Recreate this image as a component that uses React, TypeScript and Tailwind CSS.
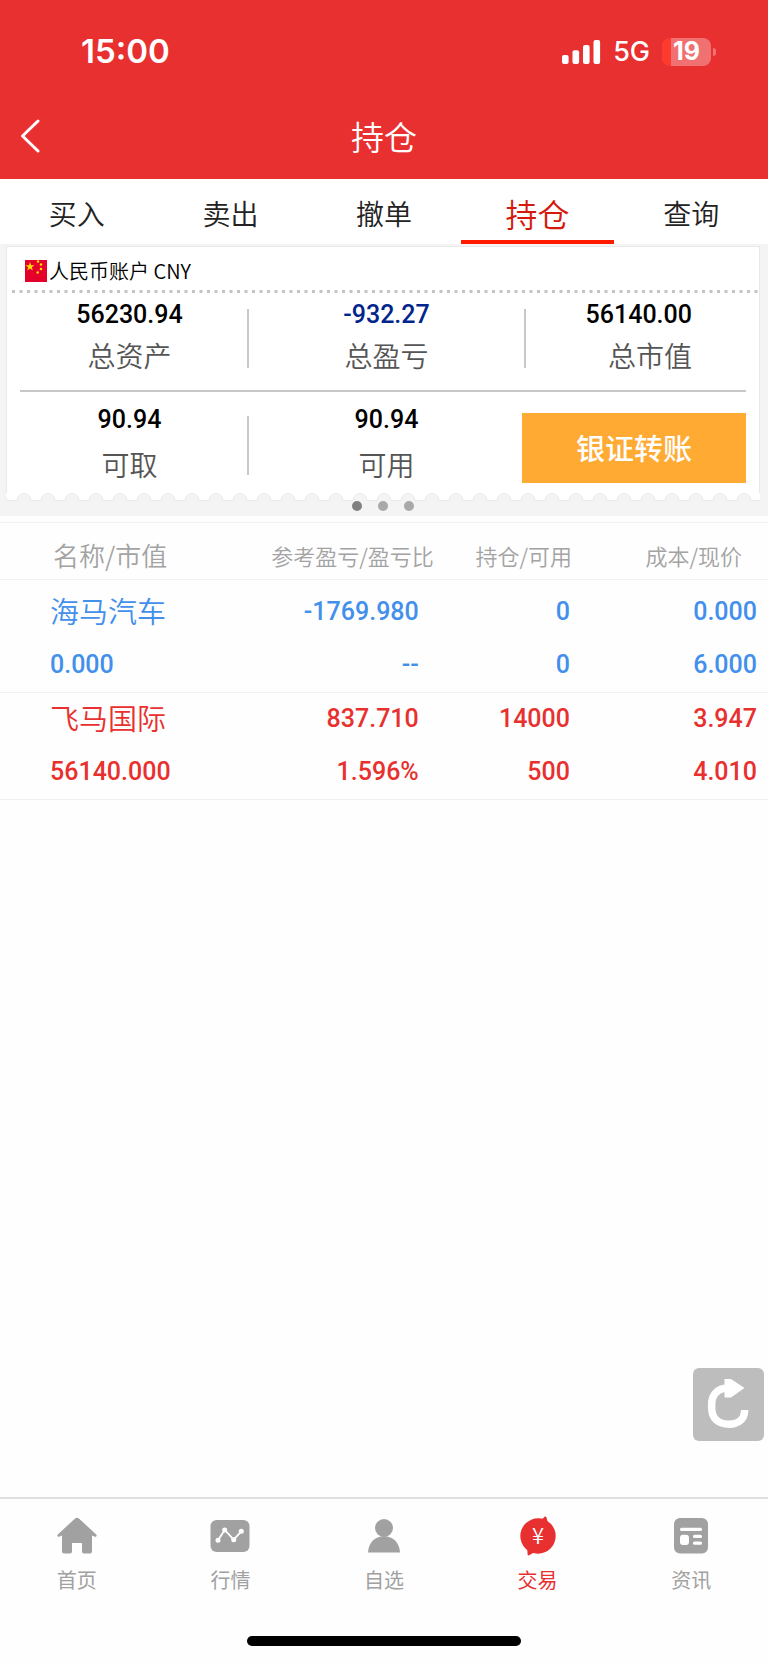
import React from "react";

const tabs = ["买入", "卖出", "撤单", "持仓", "查询"];

const holdings = [
  {
    name: "海马汽车",
    value: "0.000",
    profit: "-1769.980",
    ratio: "--",
    amount: "0",
    available: "0",
    cost: "0.000",
    price: "6.000",
    color: "text-[#428fec]",
    pad: "pt-[6px]",
  },
  {
    name: "飞马国际",
    value: "56140.000",
    profit: "837.710",
    ratio: "1.596%",
    amount: "14000",
    available: "500",
    cost: "3.947",
    price: "4.010",
    color: "text-[#e8302f]",
    pad: "",
  },
];

const HomeIcon = () => (
  <svg width="40" height="40" viewBox="0 0 40 40" fill="currentColor">
    <path d="M17.8 2.8a3.2 3.2 0 0 1 4.4 0L39.2 18.4c1.2 1.2-.2 3-1.8 2.2L35 19.4V35.500a2 2 0 0 1-2 2h-6a2 2 0 0 1-2-2V27H15v8.500a2 2 0 0 1-2 2H7a2 2 0 0 1-2-2V19.400L2.600 20.600C1 21.400-.4 19.600.8 18.400z" />
  </svg>
);

const MarketIcon = () => (
  <svg width="40" height="40" viewBox="0 0 40 40">
    <rect x="0.500" y="4" width="39" height="32" rx="6" fill="currentColor" />
    <path d="M8 24.300 14.700 14l9 9.700 7.600-8.400" fill="none" stroke="#fff" strokeWidth="1.800" />
    <g fill="#fff">
      <circle cx="8" cy="24.300" r="2.500" />
      <circle cx="14.700" cy="14" r="2.500" />
      <circle cx="23.700" cy="23.700" r="2.500" />
      <circle cx="31.300" cy="15.300" r="2.500" />
    </g>
  </svg>
);

const UserIcon = () => (
  <svg width="40" height="40" viewBox="0 0 40 40" fill="currentColor">
    <circle cx="20" cy="12" r="9" />
    <path d="M4 36.500C4.500 26.500 11 20.300 20 20.300s15.500 6.200 16 16.200z" />
  </svg>
);

const TradeIcon = () => (
  <svg width="40" height="40" viewBox="0 0 40 40" fill="currentColor">
    <circle cx="20" cy="20" r="17.700" />
    <path d="M23.500 3.200C25.500 2.800 26 .5 27.400.5s1.400 3 2.600 6zM16.500 36.800c-3 .2-4.500 2.700-6 2.700S10 36 9 33z" />
    <text
      x="20"
      y="28"
      textAnchor="middle"
      fill="#fff"
      className="font-['Noto_Sans_CJK_SC'] text-[22px] font-[350]"
    >
      ¥
    </text>
  </svg>
);

const NewsIcon = () => (
  <svg width="40" height="40" viewBox="0 0 40 40">
    <rect x="3" y="2" width="34" height="35.500" rx="6" fill="currentColor" />
    <g fill="#fff">
      <rect x="9" y="11.700" width="22" height="3.400" rx="1.500" />
      <rect x="9" y="18.700" width="9" height="10.300" rx="3" />
      <rect x="22" y="18.700" width="9" height="3.200" rx="1.500" />
      <rect x="22" y="25.500" width="9" height="3.200" rx="1.500" />
    </g>
  </svg>
);

const navItems = [
  { label: "首页", icon: <HomeIcon /> },
  { label: "行情", icon: <MarketIcon /> },
  { label: "自选", icon: <UserIcon /> },
  { label: "交易", icon: <TradeIcon />, active: true },
  { label: "资讯", icon: <NewsIcon /> },
];

const StatusBar = () => (
  <div className="flex h-[104px] items-center justify-between pr-[52px] pl-[81px] font-[Inter]">
    <span className="text-[33px] font-semibold">15:00</span>
    <div className="flex items-center">
      <svg width="39" height="24" viewBox="0 0 39 24" fill="#fff">
        <rect x="0" y="15" width="6.600" height="9" rx="2" />
        <rect x="10.500" y="10.300" width="6.600" height="13.700" rx="2" />
        <rect x="21" y="5" width="6.600" height="19" rx="2" />
        <rect x="31.500" y="0" width="6.600" height="24" rx="2" />
      </svg>
      <span className="ml-3 text-[27px] font-medium">5G</span>
      <div className="ml-3 flex h-7 w-[49px] items-center justify-center rounded-lg bg-linear-to-r from-[#ff3b30] from-[9px] to-[#f17071] to-[9px] text-[25px] font-bold">
        19
      </div>
      <div className="ml-[2px] h-2 w-[3px] rounded-r-full bg-[#f17071]"></div>
    </div>
  </div>
);

const Header = () => (
  <header className="bg-[#e83030] text-white">
    <StatusBar />
    <div className="grid h-[75px] grid-cols-3 items-center px-5 pb-3">
      <button aria-label="返回" className="justify-self-start">
        <svg width="20" height="34" viewBox="0 0 20 34" fill="none">
          <path
            d="M18 2 2.500 17 18 32"
            stroke="#fff"
            strokeWidth="3"
            strokeLinecap="round"
            strokeLinejoin="round"
          />
        </svg>
      </button>
      <h1 className="text-center text-[33px] leading-9 font-[350]">持仓</h1>
    </div>
  </header>
);

const Tabs = () => (
  <nav className="grid h-[65px] grid-cols-5 bg-white">
    {tabs.map((tab) =>
      tab === "持仓" ? (
        <button
          key={tab}
          className="border-b-4 border-[#ff1a00] pt-2 text-[32px] leading-[53px] font-[350] text-[#d51a0c]"
        >
          {tab}
        </button>
      ) : (
        <button
          key={tab}
          className="border-b-4 border-transparent pt-2 text-[28px] leading-[53px] font-[350] text-[#222]"
        >
          {tab}
        </button>
      )
    )}
  </nav>
);

const Flag = () => (
  <svg width="22" height="22" viewBox="0 0 22 22">
    <rect width="22" height="22" fill="#e4002b" />
    <g fill="#ffde00">
      <path d="M5 2l1.100 3.200h3.400L6.800 7.200l1 3.300L5 8.500l-2.800 2 1-3.300L.5 5.200h3.400z" />
      <circle cx="13" cy="1.500" r="1.300" />
      <circle cx="16" cy="4.500" r="1.300" />
      <circle cx="16" cy="9" r="1.300" />
      <circle cx="12.700" cy="12.500" r="1.300" />
    </g>
  </svg>
);

type StatProps = {
  value: string;
  label: string;
  color?: string;
  gap?: string;
};

const Stat = ({ value, label, color = "text-black", gap = "mt-1" }: StatProps) => (
  <div className="pb-2">
    <div className={`font-[Roboto] text-[25px] leading-9 font-medium ${color}`}>{value}</div>
    <div className={`text-[28px] leading-9 font-[350] text-[#555] ${gap}`}>{label}</div>
  </div>
);

const AccountCard = () => (
  <section className="bg-[#f4f4f4] pt-[2px] pr-2 pb-[5px] pl-[6px]">
    <div className="border border-b-0 border-[#e9e9e9] bg-white">
      <div className="flex h-[43px] items-center pt-1 pl-[18px] text-[20px] text-black">
        <Flag />
        <span className="ml-[2px] leading-6 font-[350]">人民币账户 CNY</span>
      </div>
      <svg width="100%" height="3" className="block pl-[5px]">
        <line x1="0" y1="1.500" x2="100%" y2="1.500" stroke="#c4c4c4" strokeWidth="3" strokeDasharray="3 4.500" />
      </svg>
      <div className="mx-[13px]">
        <div className="grid h-[99px] grid-cols-[227fr_279fr_220fr] items-center border-b-2 border-[#c8c8c8] pb-[6px] text-center">
          <div className="pr-2">
            <Stat value="56230.94" label="总资产" />
          </div>
          <div className="flex items-center justify-between">
            <span className="h-[59px] w-[2px] bg-[#c8c8c8]"></span>
            <Stat value="-932.27" label="总盈亏" color="text-[#00258c]" />
            <span className="h-[59px] w-[2px] bg-[#c8c8c8]"></span>
          </div>
          <div className="pr-[54px] text-right">
            <Stat value="56140.00" label="总市值" />
          </div>
        </div>
        <div className="grid h-[101px] grid-cols-[227fr_279fr_220fr] items-center pt-[6px] text-center">
          <div className="pr-2">
            <Stat value="90.94" label="可取" gap="mt-2" />
          </div>
          <div className="flex items-center justify-between">
            <span className="h-[59px] w-[2px] bg-[#c8c8c8]"></span>
            <Stat value="90.94" label="可用" gap="mt-2" />
            <span className="w-[2px]"></span>
          </div>
          <button className="mb-[10px] -ml-1 h-[70px] self-end bg-[#ffaa33] text-[29px] font-medium text-white">
            银证转账
          </button>
        </div>
      </div>
    </div>
    {/* torn ticket edge */}
    <svg width="100%" height="8" className="block">
      <defs>
        <pattern id="scallop" x="6" y="0" width="24" height="8" patternUnits="userSpaceOnUse">
          <path d="M0 0H24V7.500H19a7 7 0 0 0-14 0H0z" fill="#fff" />
          <path d="M0 7.500H5a7 7 0 0 1 14 0h5" fill="none" stroke="#e9e9e9" />
        </pattern>
      </defs>
      <rect width="100%" height="8" fill="url(#scallop)" />
    </svg>
    <div className="flex justify-center gap-4">
      <span className="size-[10px] rounded-full bg-[#808080]"></span>
      <span className="size-[10px] rounded-full bg-[#a9a9a9]"></span>
      <span className="size-[10px] rounded-full bg-[#a9a9a9]"></span>
    </div>
  </section>
);

const Holdings = () => (
  <table className="mt-[6px] w-full table-fixed border-y border-[#f1f1f1]">
    <colgroup>
      <col className="w-[31%]" />
      <col />
      <col className="w-[18%]" />
      <col className="w-[25%]" />
    </colgroup>
    <thead>
      <tr className="h-[57px] border-b border-[#f1f1f1] text-[22px] leading-9 whitespace-nowrap text-[#a3a3a3]">
        <th className="pt-2 pl-[53px] text-left text-[26px] font-[350]">名称/市值</th>
        <th className="pt-2 pr-1 text-right font-[350]">参考盈亏/盈亏比</th>
        <th className="pt-2 pr-1 text-right font-[350]">持仓/可用</th>
        <th className="pt-2 pr-[26px] text-right font-[350]">成本/现价</th>
      </tr>
    </thead>
    {holdings.map((h) => (
      <tbody
        key={h.name}
        className={`border-b border-[#f1f1f1] font-[Roboto] text-[25px] leading-[52px] font-medium ${h.color}`}
      >
        <tr>
          <td
            className={`pb-[5px] pl-[50px] font-['Noto_Sans_CJK_SC'] text-[29px] leading-[48px] font-[350] ${h.pad}`}
          >
            {h.name}
          </td>
          <td className={`pr-[19px] pb-px text-right ${h.pad}`}>{h.profit}</td>
          <td className={`pr-[6px] pb-px text-right ${h.pad}`}>{h.amount}</td>
          <td className={`pr-[11px] pb-px text-right ${h.pad}`}>{h.cost}</td>
        </tr>
        <tr>
          <td className="pb-px pl-[50px]">{h.value}</td>
          <td className="pr-[19px] pb-px text-right">{h.ratio}</td>
          <td className="pr-[6px] pb-px text-right">{h.available}</td>
          <td className="pr-[11px] pb-px text-right">{h.price}</td>
        </tr>
      </tbody>
    ))}
  </table>
);

const RefreshButton = () => (
  <button
    aria-label="刷新"
    className="absolute right-1 bottom-14 h-[73px] w-[71px] rounded-md bg-[#bdbdbd]"
  >
    <svg width="71" height="73" viewBox="0 0 71 73" fill="none">
      <path
        d="M51.700 42C51.700 51 45.500 56.200 36 56.200C25.500 56.200 18.700 50.500 18.700 40V36C18.700 26.500 25 20.300 34 20.300"
        stroke="#fff"
        strokeWidth="7.500"
      />
      <path d="M31.500 11H38L51.500 20 38 29.500H31.500z" fill="#fff" />
    </svg>
  </button>
);

const BottomNav = () => (
  <footer className="border-t-2 border-[#e0e0e0]">
    <nav className="grid grid-cols-5 pt-[17px]">
      {navItems.map((item) => (
        <a
          key={item.label}
          href="#"
          className={`flex flex-col items-center gap-[10px] text-[20px] leading-7 ${
            item.active ? "text-[#e83030]" : "text-[#a1a1a1]"
          }`}
        >
          {item.icon}
          <span>{item.label}</span>
        </a>
      ))}
    </nav>
    <div className="mx-auto mt-[42px] mb-[17px] h-[10px] w-[274px] rounded-full bg-black"></div>
  </footer>
);

export default function App() {
  return (
    <div className="flex min-h-screen flex-col bg-[#fefefe] font-['Noto_Sans_CJK_SC',sans-serif]">
      <Header />
      <Tabs />
      <AccountCard />
      <main className="relative flex-1">
        <Holdings />
        <RefreshButton />
      </main>
      <BottomNav />
    </div>
  );
}
